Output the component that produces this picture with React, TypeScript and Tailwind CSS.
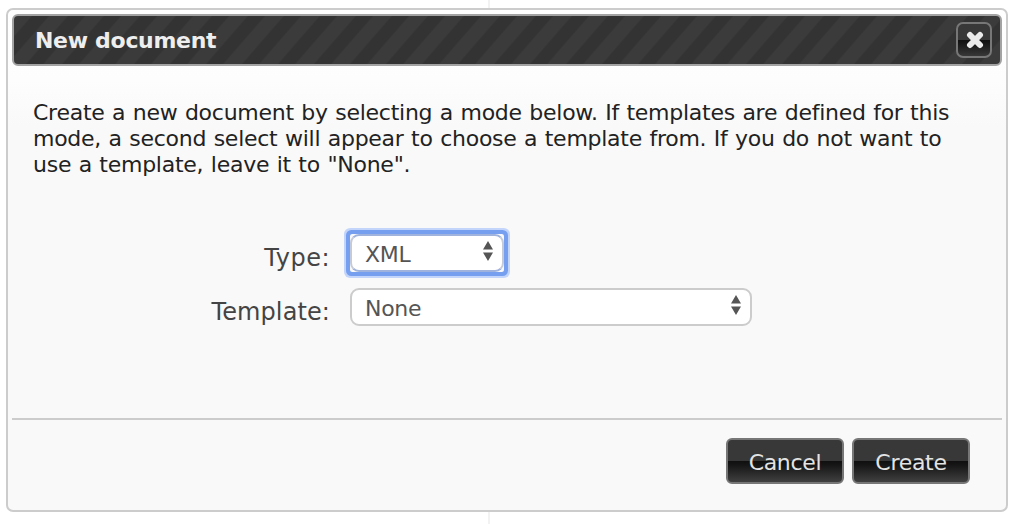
import type { ReactNode } from 'react';

function Arrows() {
  return (
    <svg width="10" height="20" viewBox="0 0 10 20" className="mb-1 fill-[#555]">
      <path d="M5 0 L10 8.5 H0Z M0 11.5 H10 L5 20Z" />
    </svg>
  );
}

function Select({ value, className, focused }: { value: string; className: string; focused?: boolean }) {
  return (
    <div className={focused ? 'w-max rounded-[2px] shadow-[0_0_0_4px_#769ff0,0_0_0_6px_#c3d5fa]' : 'w-max'}>
      <div
        className={`flex items-center justify-between rounded-[9px] border-2 bg-white text-[22px] text-[#555] ${className}`}
      >
        <span className="pt-[3px] tracking-[-0.3px]">{value}</span>
        <Arrows />
      </div>
    </div>
  );
}

function Button({ children }: { children: ReactNode }) {
  return (
    <button className="flex h-[46px] w-[118px] items-center justify-center rounded-[6px] border-2 border-[#777] bg-[linear-gradient(#383838_0%,#383838_50%,#101010_51%,#161616_60%,#404040_100%)] pt-0.5 text-[22px] tracking-[-0.3px] text-[#e3e3e3]">
      {children}
    </button>
  );
}

export default function App() {
  return (
    <div className="h-[524px] w-[1016px] overflow-hidden bg-white bg-[linear-gradient(#f2f2f2,#f2f2f2)] bg-[length:2px_100%] bg-[position:488px_0] bg-no-repeat pt-2 pl-1.5 font-['DejaVu_Sans',Verdana,sans-serif]">
      <div className="flex h-[504px] w-[1002px] flex-col rounded-[7px] border-2 border-[#ccc] bg-[#f9f9f9] bg-[linear-gradient(#ffffff_0px,#fdfdfd_70px,#f9f9f9_115px)] p-1">
        <header className="flex h-[52px] shrink-0 items-center justify-between rounded-[6px] border-2 border-[#a3a3a3] bg-[repeating-linear-gradient(131deg,#3b3b3b_0px,#3b3b3b_12.6px,#333_14.2px,#333_25.6px,#3b3b3b_27.17px)] pr-2 pl-[21px]">
          <h1 className="text-[22px] font-bold tracking-[-0.3px] text-[#eee]">New document</h1>
          <button
            aria-label="Close"
            className="flex size-9 items-center justify-center rounded-[7px] border-2 border-[#777] bg-[linear-gradient(#383838_0%,#383838_50%,#101010_51%,#161616_60%,#383838_100%)]"
          >
            <svg width="18" height="18" viewBox="0 0 18 18" className="ml-px stroke-[#eaeaea]" strokeWidth="6" strokeLinecap="round">
              <path d="M4 4 L14 14 M14 4 L4 14" />
            </svg>
          </button>
        </header>
        <p className="mt-[34px] h-[78px] pl-[21px] text-[22px] leading-[26px] tracking-[-0.26px] whitespace-nowrap text-[#222] [word-spacing:0.75px]">
          Create a new document by selecting a mode below. If templates are defined for this
          <br />
          mode, a second select will appear to choose a template from. If you do not want to
          <br />
          use a template, leave it to "None".
        </p>
        <div className="mt-14 grid grid-cols-[318px_auto] justify-start gap-x-5 gap-y-4 text-[24px] leading-[30px] text-[#444]">
          <span className="justify-self-end pt-[9px] -mb-px tracking-[0.5px]">Type:</span>
          <Select
            value="XML"
            focused
            className="h-[38px] w-[154px] border-x-[#c5cad8] border-y-[#9fb3dc] pr-[9px] pl-[13px]"
          />
          <span className="justify-self-end pt-[9px] -mb-px tracking-[0.1px]">Template:</span>
          <Select value="None" className="h-[38px] w-[402px] border-[#ccc] pr-[9px] pl-[13px]" />
        </div>
        <footer className="mt-auto flex h-[88px] shrink-0 justify-end gap-2 border-t-2 border-[#ccc] pt-[18px] pr-8">
          <Button>Cancel</Button>
          <Button>Create</Button>
        </footer>
      </div>
    </div>
  );
}
